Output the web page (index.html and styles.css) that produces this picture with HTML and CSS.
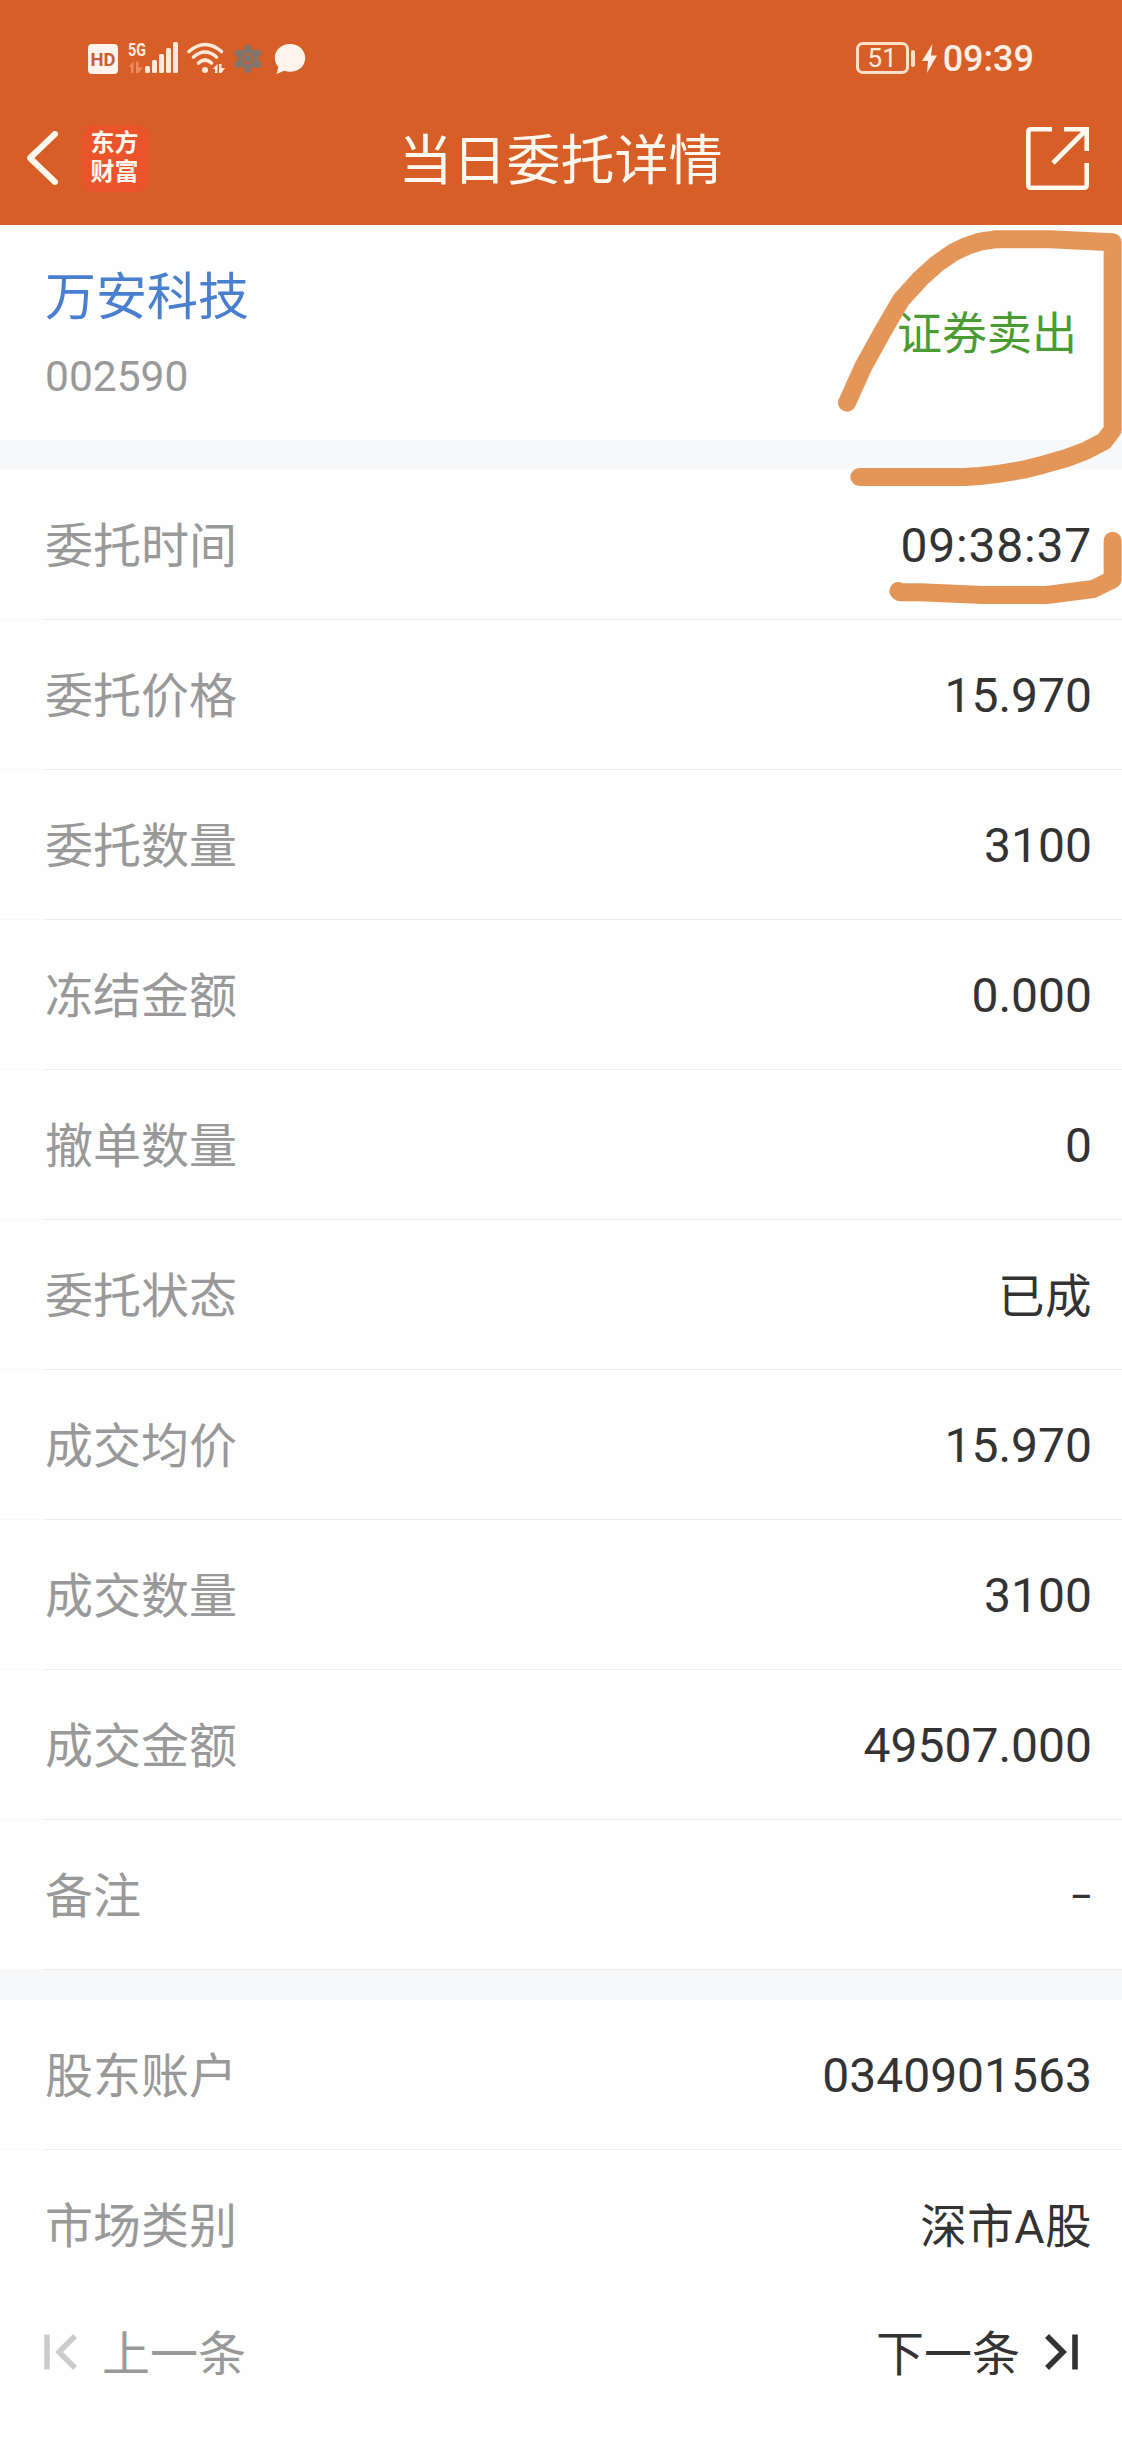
FILE: index.html
```html
<!DOCTYPE html>
<html lang="zh-CN">
<head>
  <meta charset="UTF-8" />
  <meta name="viewport" content="width=device-width, initial-scale=1.0" />
  <title>当日委托详情</title>
  <link rel="stylesheet" href="styles.css">
</head>
<body>
  <header class="top">
    <div class="status-bar">
      <svg class="status-icons" width="218" height="60" viewBox="88 28 218 60">
        <rect x="88" y="44" width="30" height="30" rx="4" fill="#fff3ec"/>
        <text class="hd" x="103" y="65.500" text-anchor="middle" textLength="25" lengthAdjust="spacingAndGlyphs">HD</text>
        <text class="net" x="128" y="56" textLength="18" lengthAdjust="spacingAndGlyphs">5G</text>
        <path d="M128.500 66.500l5-5v11.500h-2.500v-6.500zM136 61.500h2.500v6h4.500l-4.500 5.500h-2.500z" fill="#ee8c5e"/>
        <g fill="#ffe9da">
          <rect x="145" y="66" width="5" height="7" rx="1.500"/>
          <rect x="152" y="60" width="5" height="13" rx="1.500"/>
          <rect x="159" y="54" width="5" height="19" rx="1.500"/>
          <rect x="166" y="48" width="5" height="25" rx="1.500"/>
          <rect x="173" y="42" width="5" height="31" rx="1.500"/>
        </g>
        <g fill="none" stroke="#ffe9da" stroke-width="3.600" stroke-linecap="round">
          <path d="M189 51.500q16-14 32.500 0"/>
          <path d="M193.500 57q11.500-10 23 0"/>
          <path d="M198.500 63q6.500-6 13 0"/>
        </g>
        <circle cx="205" cy="70" r="3" fill="#ffe9da"/>
        <path d="M212.500 69l5-5v9h-2.500v-4zM219 64h2.500v4h3.500l-3.500 5h-2.500z" fill="#ffe9da"/>
        <circle cx="247.800" cy="58.700" r="10.500" fill="#82756c"/>
        <path d="M247.800 48v21.400M238 53l19.600 11.400M257.600 53l-19.600 11.400" stroke="#82756c" stroke-width="7" stroke-linecap="round"/>
        <circle cx="247.800" cy="58.700" r="4.800" fill="#82756c" stroke="#c0623a" stroke-width="1.800"/>
        <path d="M290 44c8.500 0 15.200 6 15.200 14s-6.700 13.800-15.200 13.800c-2 0-4-.3-5.800-1l-7.700 3.200 1.800-6.800c-2-2.500-3.500-5.700-3.500-9.200 0-8 6.700-14 15.200-14z" fill="#fff3ec"/>
      </svg>
      <div class="status-right">
        <div class="battery">51</div>
        <span class="battery-cap"></span>
        <svg width="15" height="29" viewBox="0 0 15 29">
          <path d="M10.500 0L0 17h6L5 29 15 11.500H9z" fill="#ffefe4"/>
        </svg>
        <span class="clock">09:39</span>
      </div>
    </div>

    <div class="nav">
      <div class="nav-left">
        <svg width="32" height="54" viewBox="0 0 32 54">
          <path d="M28 3L3 27l25 24" fill="none" stroke="#fff8ef" stroke-width="6" stroke-linecap="round" stroke-linejoin="round"/>
        </svg>
        <div class="logo">东方<br>财富</div>
      </div>
      <h1>当日委托详情</h1>
      <svg width="63" height="63" viewBox="0 0 63 63" fill="none" stroke="#fff8ef" stroke-width="4.600">
        <path d="M26 2.300H5q-2.700 0-2.700 2.700V58q0 2.700 2.700 2.700H58q2.700 0 2.700-2.700V36"/>
        <path d="M38 2.300H60.700V24M60 3L27 36"/>
      </svg>
    </div>
  </header>

  <section class="stock">
    <div>
      <div class="stock-name">万安科技</div>
      <div class="stock-code">002590</div>
    </div>
    <div class="side">证券卖出</div>
  </section>

  <section class="list">
    <div class="row"><span class="label">委托时间</span><span class="value time">09:38:37</span></div>
    <div class="row"><span class="label">委托价格</span><span class="value">15.970</span></div>
    <div class="row"><span class="label">委托数量</span><span class="value">3100</span></div>
    <div class="row"><span class="label">冻结金额</span><span class="value">0.000</span></div>
    <div class="row"><span class="label">撤单数量</span><span class="value">0</span></div>
    <div class="row"><span class="label">委托状态</span><span class="value cn">已成</span></div>
    <div class="row"><span class="label">成交均价</span><span class="value">15.970</span></div>
    <div class="row"><span class="label">成交数量</span><span class="value">3100</span></div>
    <div class="row"><span class="label">成交金额</span><span class="value">49507.000</span></div>
    <div class="row"><span class="label">备注</span><span class="value dash">–</span></div>
  </section>

  <section class="list">
    <div class="row"><span class="label">股东账户</span><span class="value">0340901563</span></div>
    <div class="row"><span class="label">市场类别</span><span class="value cn">深市A股</span></div>
  </section>

  <footer class="pager">
    <div class="prev">
      <svg width="33" height="36" viewBox="0 0 33 36" fill="none" stroke="#ccc" stroke-width="5.600">
        <path d="M3 .5v35M31 2L15 18l16 16"/>
      </svg>
      <span>上一条</span>
    </div>
    <div class="next">
      <span>下一条</span>
      <svg width="33" height="36" viewBox="0 0 33 36" fill="none" stroke="#333" stroke-width="5.600">
        <path d="M30 .5v35M2 2l16 16L2 34"/>
      </svg>
    </div>
  </footer>

  <!-- marker strokes around the side and the time -->
  <svg class="marker" width="322" height="400" viewBox="0 0 966 1200">
    <path d="M141 548L190 440 245 340 303 240 362 175 410 132 460 97 500 78 540 65 585 58H750L938 67V630L912 664 860 691 800 714 730 734 670 749 600 761 540 768 495 771H178"/>
    <path d="M295 1113L300 1117 360 1117 550 1125H740L880 1107 938 1078V962"/>
  </svg>
</body>
</html>
```

FILE: styles.css
```css
* {
  box-sizing: border-box;
}
body {
  margin: 0;
  background: #fefefe;
  color: #333;
  font-family: Roboto, "Noto Sans CJK SC", sans-serif;
  font-size: 48px;
}
svg {
  display: block;
  flex: none;
}
.top {
  height: 225px;
  background: #d75f27;
  color: #fff8ef;
}
.status-bar {
  display: flex;
  justify-content: space-between;
  align-items: center;
  height: 92px;
  padding: 24px 88px 0;
}
.hd {
  font: bold 19px Roboto, sans-serif;
  fill: #c4602f;
}
.net {
  font: bold 18px Roboto, sans-serif;
  fill: #ffe9da;
}
.status-right {
  display: flex;
  align-items: center;
}
.battery {
  width: 53px;
  height: 32px;
  border: 3px solid #ffe0cb;
  border-radius: 7px;
  font-size: 26px;
  line-height: 27px;
  text-align: center;
  color: #ffefe4;
}
.battery-cap {
  width: 4px;
  height: 17px;
  margin: 0 7px 0 2px;
  border-radius: 2px;
  background: #ffe0cb;
}
.clock {
  padding-top: 2px;
  margin-left: 6px;
  font-size: 36px;
  font-weight: 500;
  line-height: 36px;
  color: #ffefe4;
}
.nav {
  display: grid;
  grid-template-columns: 1fr auto 1fr;
  align-items: center;
  height: 132px;
  padding: 0 33px 0 27px;
}
.nav > svg {
  justify-self: end;
}
.nav-left {
  display: flex;
  align-items: center;
  gap: 23px;
}
.logo {
  width: 67px;
  height: 67px;
  padding: 4px 2px 0 0;
  border-radius: 12px;
  background: #e9542a;
  font-size: 24px;
  font-weight: bold;
  line-height: 29px;
  text-align: center;
}
h1 {
  margin: 0;
  padding: 7px 0 0 5px;
  font-size: 54px;
  font-weight: normal;
  line-height: 60px;
}
.stock {
  display: flex;
  justify-content: space-between;
  align-items: center;
  height: 215px;
  padding: 0 45px;
}
.stock-name {
  padding-top: 8px;
  font-size: 51px;
  line-height: 80px;
  color: #4a7fcf;
}
.stock-code {
  font-size: 42.5px;
  line-height: 78px;
  color: #999;
}
.side {
  padding-top: 4px;
  font-size: 45px;
  line-height: 60px;
  color: #4a9c32;
}
.list {
  border-top: 30px solid #f6f8fa;
}
.row {
  display: flex;
  justify-content: space-between;
  align-items: center;
  height: 150px;
  padding: 3px 30px 0 45px;
  background: linear-gradient(to right, #f8f8f8 45px, #ececec 45px) bottom / 100% 1px no-repeat;
}
.list:last-of-type .row:last-child {
  background: none;
}
.label {
  color: #999;
  line-height: 60px;
}
.value {
  line-height: 60px;
  padding-bottom: 2px;
}
.time {
  letter-spacing: 0.8px;
}
.cn {
  padding-bottom: 0;
  font-size: 46.5px;
  letter-spacing: 0.5px;
}
.dash {
  font-size: 34px;
  font-weight: 500;
}
.pager {
  display: flex;
  justify-content: space-between;
  align-items: center;
  height: 104px;
  padding: 0 44px;
  line-height: 60px;
}
.pager span {
  padding-top: 5px;
}
.prev, .next {
  display: flex;
  align-items: center;
  gap: 25px;
}
.prev {
  color: #999;
}
.marker {
  position: absolute;
  top: 220px;
  left: 800px;
  fill: none;
  stroke: #e49658;
  stroke-width: 54;
  stroke-linecap: round;
  stroke-linejoin: round;
}
```
